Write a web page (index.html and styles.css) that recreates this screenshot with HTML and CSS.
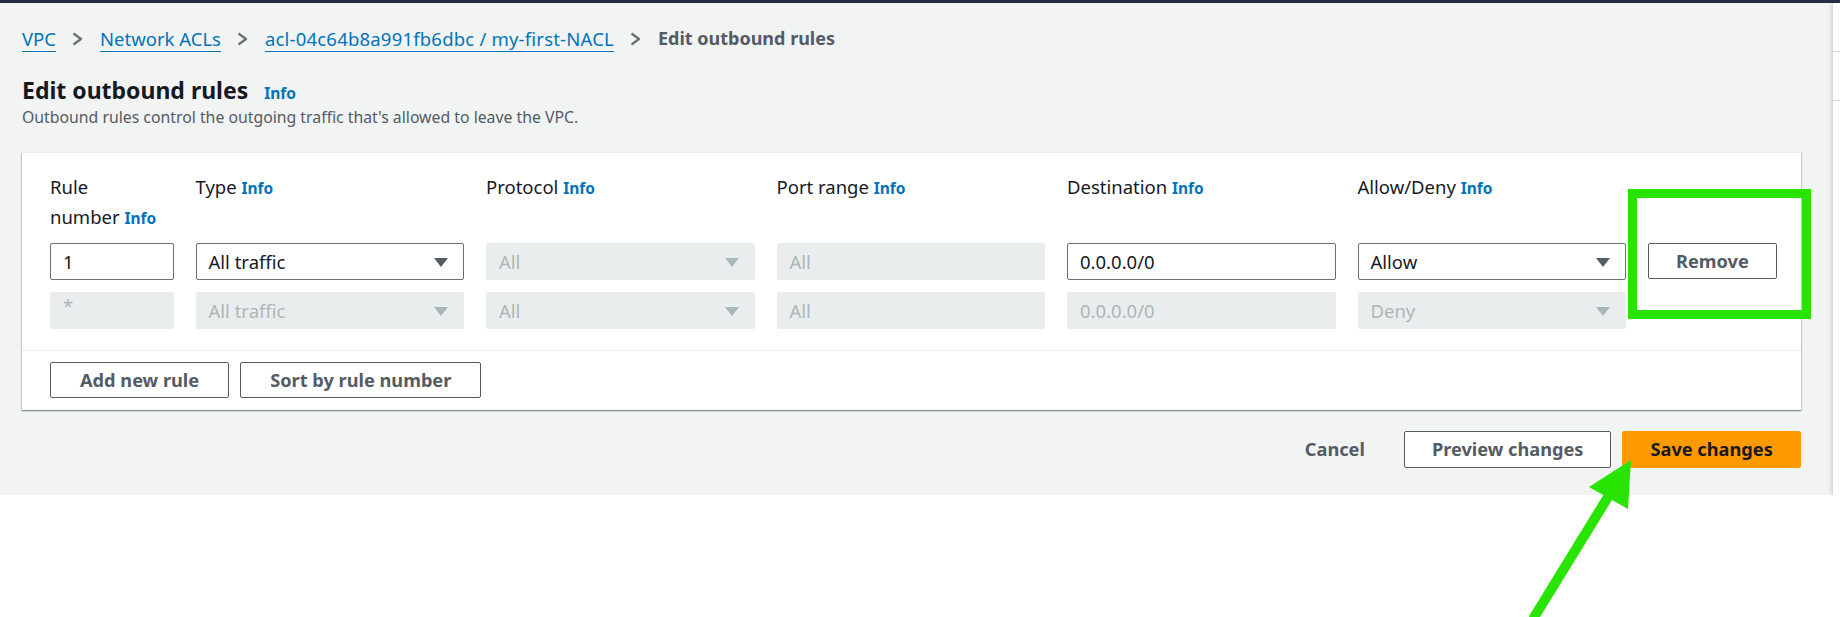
FILE: index.html
```html
<!DOCTYPE html>
<html lang="en">
<head>
<meta charset="utf-8">
<title>Edit outbound rules</title>
<link rel="stylesheet" href="styles.css">
</head>
<body>
<div class="topbar"></div>
<div class="app">
  <main class="main">
    <nav class="breadcrumbs">
      <a class="crumb" href="#">VPC</a>
      <svg class="chev" width="11" height="14" viewBox="0 0 11 14"><polyline points="1.5,1.5 9,7 1.5,12.5" fill="none" stroke="#687078" stroke-width="2.2" stroke-linejoin="round"/></svg>
      <a class="crumb" href="#">Network ACLs</a>
      <svg class="chev" width="11" height="14" viewBox="0 0 11 14"><polyline points="1.5,1.5 9,7 1.5,12.5" fill="none" stroke="#687078" stroke-width="2.2" stroke-linejoin="round"/></svg>
      <a class="crumb crumb-id" href="#">acl-04c64b8a991fb6dbc / my-first-NACL</a>
      <svg class="chev" width="11" height="14" viewBox="0 0 11 14"><polyline points="1.5,1.5 9,7 1.5,12.5" fill="none" stroke="#687078" stroke-width="2.2" stroke-linejoin="round"/></svg>
      <span class="current">Edit outbound rules</span>
    </nav>

    <header class="page-header">
      <h1 class="title">Edit outbound rules <a class="info info-title" href="#">Info</a></h1>
      <p class="desc">Outbound rules control the outgoing traffic that's allowed to leave the VPC.</p>
    </header>

    <section class="card">
      <div class="rules">
        <div class="label">Rule <span class="nowrap">number <a class="info" href="#">Info</a></span></div>
        <div class="label">Type <a class="info" href="#">Info</a></div>
        <div class="label">Protocol <a class="info" href="#">Info</a></div>
        <div class="label">Port range <a class="info" href="#">Info</a></div>
        <div class="label">Destination <a class="info" href="#">Info</a></div>
        <div class="label">Allow/Deny <a class="info" href="#">Info</a></div>
        <div class="label"></div>

        <div class="field">1</div>
        <div class="field select">All traffic<span class="caret"></span></div>
        <div class="field disabled select">All<span class="caret"></span></div>
        <div class="field disabled">All</div>
        <div class="field">0.0.0.0/0</div>
        <div class="field select">Allow<span class="caret"></span></div>
        <div class="cell-btn"><button class="btn btn-remove">Remove</button></div>

        <div class="field disabled star">*</div>
        <div class="field disabled select">All traffic<span class="caret"></span></div>
        <div class="field disabled select">All<span class="caret"></span></div>
        <div class="field disabled">All</div>
        <div class="field disabled">0.0.0.0/0</div>
        <div class="field disabled select">Deny<span class="caret"></span></div>
        <div></div>
      </div>
      <div class="card-footer">
        <button class="btn">Add new rule</button>
        <button class="btn">Sort by rule number</button>
      </div>
    </section>

    <div class="actions">
      <button class="btn btn-link">Cancel</button>
      <button class="btn btn-action">Preview changes</button>
      <button class="btn btn-primary">Save changes</button>
    </div>
  </main>
  <aside class="tools">
    <div class="tools-sec"></div>
    <div class="tools-sec"></div>
  </aside>
</div>

<div class="highlight"></div>
<svg class="arrow" width="130" height="170" viewBox="1510 450 130 170">
  <line x1="1608" y1="497" x2="1533" y2="619" stroke="#29e400" stroke-width="10"/>
  <polygon points="1631,460 1589,487 1628,509" fill="#29e400"/>
</svg>
</body>
</html>
```

FILE: styles.css
```css
* { box-sizing: border-box; }

html, body {
  margin: 0;
  padding: 0;
  background: #ffffff;
}

body {
  font-family: "Noto Sans", "Open Sans", sans-serif;
  font-size: 18.5px;
  color: #16191f;
  position: relative;
  width: 1840px;
  height: 617px;
  overflow: hidden;
}

.topbar {
  height: 3px;
  background: #232f3e;
}

.app {
  display: flex;
  align-items: stretch;
}

.main {
  flex: 1;
  background: #f2f3f3;
  padding: 23px 31px 27px 22px;
}

/* breadcrumbs */
.breadcrumbs {
  display: flex;
  align-items: center;
  height: 25px;
  line-height: 25px;
  font-size: 18.5px;
  white-space: nowrap;
}

.crumb {
  color: #0073bb;
  text-decoration: underline;
  text-decoration-thickness: 1px;
  text-underline-offset: 5px;
}

.crumb-id {
  letter-spacing: 0.2px;
}

.chev {
  margin: 0 17px 0 16px;
  flex: none;
}

.current {
  color: #545b64;
  font-weight: 700;
  font-size: 18px;
}

/* header */
.page-header {
  margin-top: 24px;
}

.title {
  margin: 0;
  font-size: 23px;
  line-height: 30px;
  height: 30px;
  font-weight: 700;
  color: #16191f;
}

.info {
  color: #0073bb;
  font-size: 15.5px;
  line-height: 1;
  font-weight: 700;
  text-decoration: none;
}

.info-title {
  margin-left: 10px;
}

.desc {
  margin: 2px 0 0;
  font-size: 15.8px;
  line-height: 20px;
  color: #545b64;
}

/* card */
.card {
  margin-top: 25px;
  background: #ffffff;
  border-top: 1px solid #eaeded;
  box-shadow: 0 1px 1px 0 rgba(0, 28, 36, 0.3), 1px 1px 1px 0 rgba(0, 28, 36, 0.15), -1px 1px 1px 0 rgba(0, 28, 36, 0.15);
}

.rules {
  display: grid;
  grid-template-columns: 123.5px repeat(5, 268.5px) auto;
  grid-template-rows: 59px 37px 37px;
  column-gap: 22px;
  row-gap: 12px;
  padding: 19px 24px 21px 28px;
}

.label {
  line-height: 30px;
  font-size: 18.5px;
  color: #16191f;
}

.nowrap {
  white-space: nowrap;
}

.field {
  position: relative;
  height: 37px;
  border: 1px solid #687078;
  border-radius: 2px;
  background: #ffffff;
  padding: 0 12px;
  line-height: 35px;
  font-size: 18.5px;
  color: #16191f;
  white-space: nowrap;
}

.field.disabled {
  background: #eaeded;
  border-color: #eaeded;
  color: #aab7b8;
}

.field.star {
  line-height: 26px;
}

.caret {
  position: absolute;
  right: 15px;
  top: 14px;
  width: 0;
  height: 0;
  border-left: 7px solid transparent;
  border-right: 7px solid transparent;
  border-top: 9px solid #545b64;
}

.field.disabled .caret {
  border-top-color: #aab7b8;
}

.cell-btn {
  display: flex;
  align-items: flex-start;
}

/* buttons */
.btn {
  font-family: "Noto Sans", "Open Sans", sans-serif;
  font-size: 18.2px;
  font-weight: 700;
  height: 36px;
  padding: 0 27px;
  border: 1px solid #545b64;
  border-radius: 2px;
  background: #ffffff;
  color: #545b64;
  line-height: 34px;
  cursor: pointer;
  white-space: nowrap;
}

.card-footer {
  display: flex;
  gap: 11px;
  padding: 11px 28px 12px;
  border-top: 1px solid #eaeded;
}

.card-footer .btn {
  padding: 0 29px;
}

.actions {
  display: flex;
  justify-content: flex-end;
  align-items: center;
  gap: 11px;
  margin-top: 21px;
}

.actions .btn {
  height: 37px;
  line-height: 35px;
}

.btn-link {
  border-color: transparent;
  background: transparent;
}

.btn-primary {
  background: #ff9900;
  border-color: #ff9900;
  color: #16191f;
}

/* right tools panel */
.tools {
  width: 9px;
  flex: none;
  background: #ffffff;
  border-left: 1px solid #d5dbdb;
  box-shadow: -2px 0 2px rgba(0, 28, 36, 0.08);
}

.tools-sec {
  height: 49px;
  border-bottom: 1px solid #d5dbdb;
}

/* annotation overlays */
.highlight {
  position: absolute;
  left: 1628px;
  top: 189px;
  width: 183px;
  height: 130px;
  border: 9px solid #29e400;
  pointer-events: none;
}

.arrow {
  position: absolute;
  left: 1510px;
  top: 450px;
  pointer-events: none;
}
```
